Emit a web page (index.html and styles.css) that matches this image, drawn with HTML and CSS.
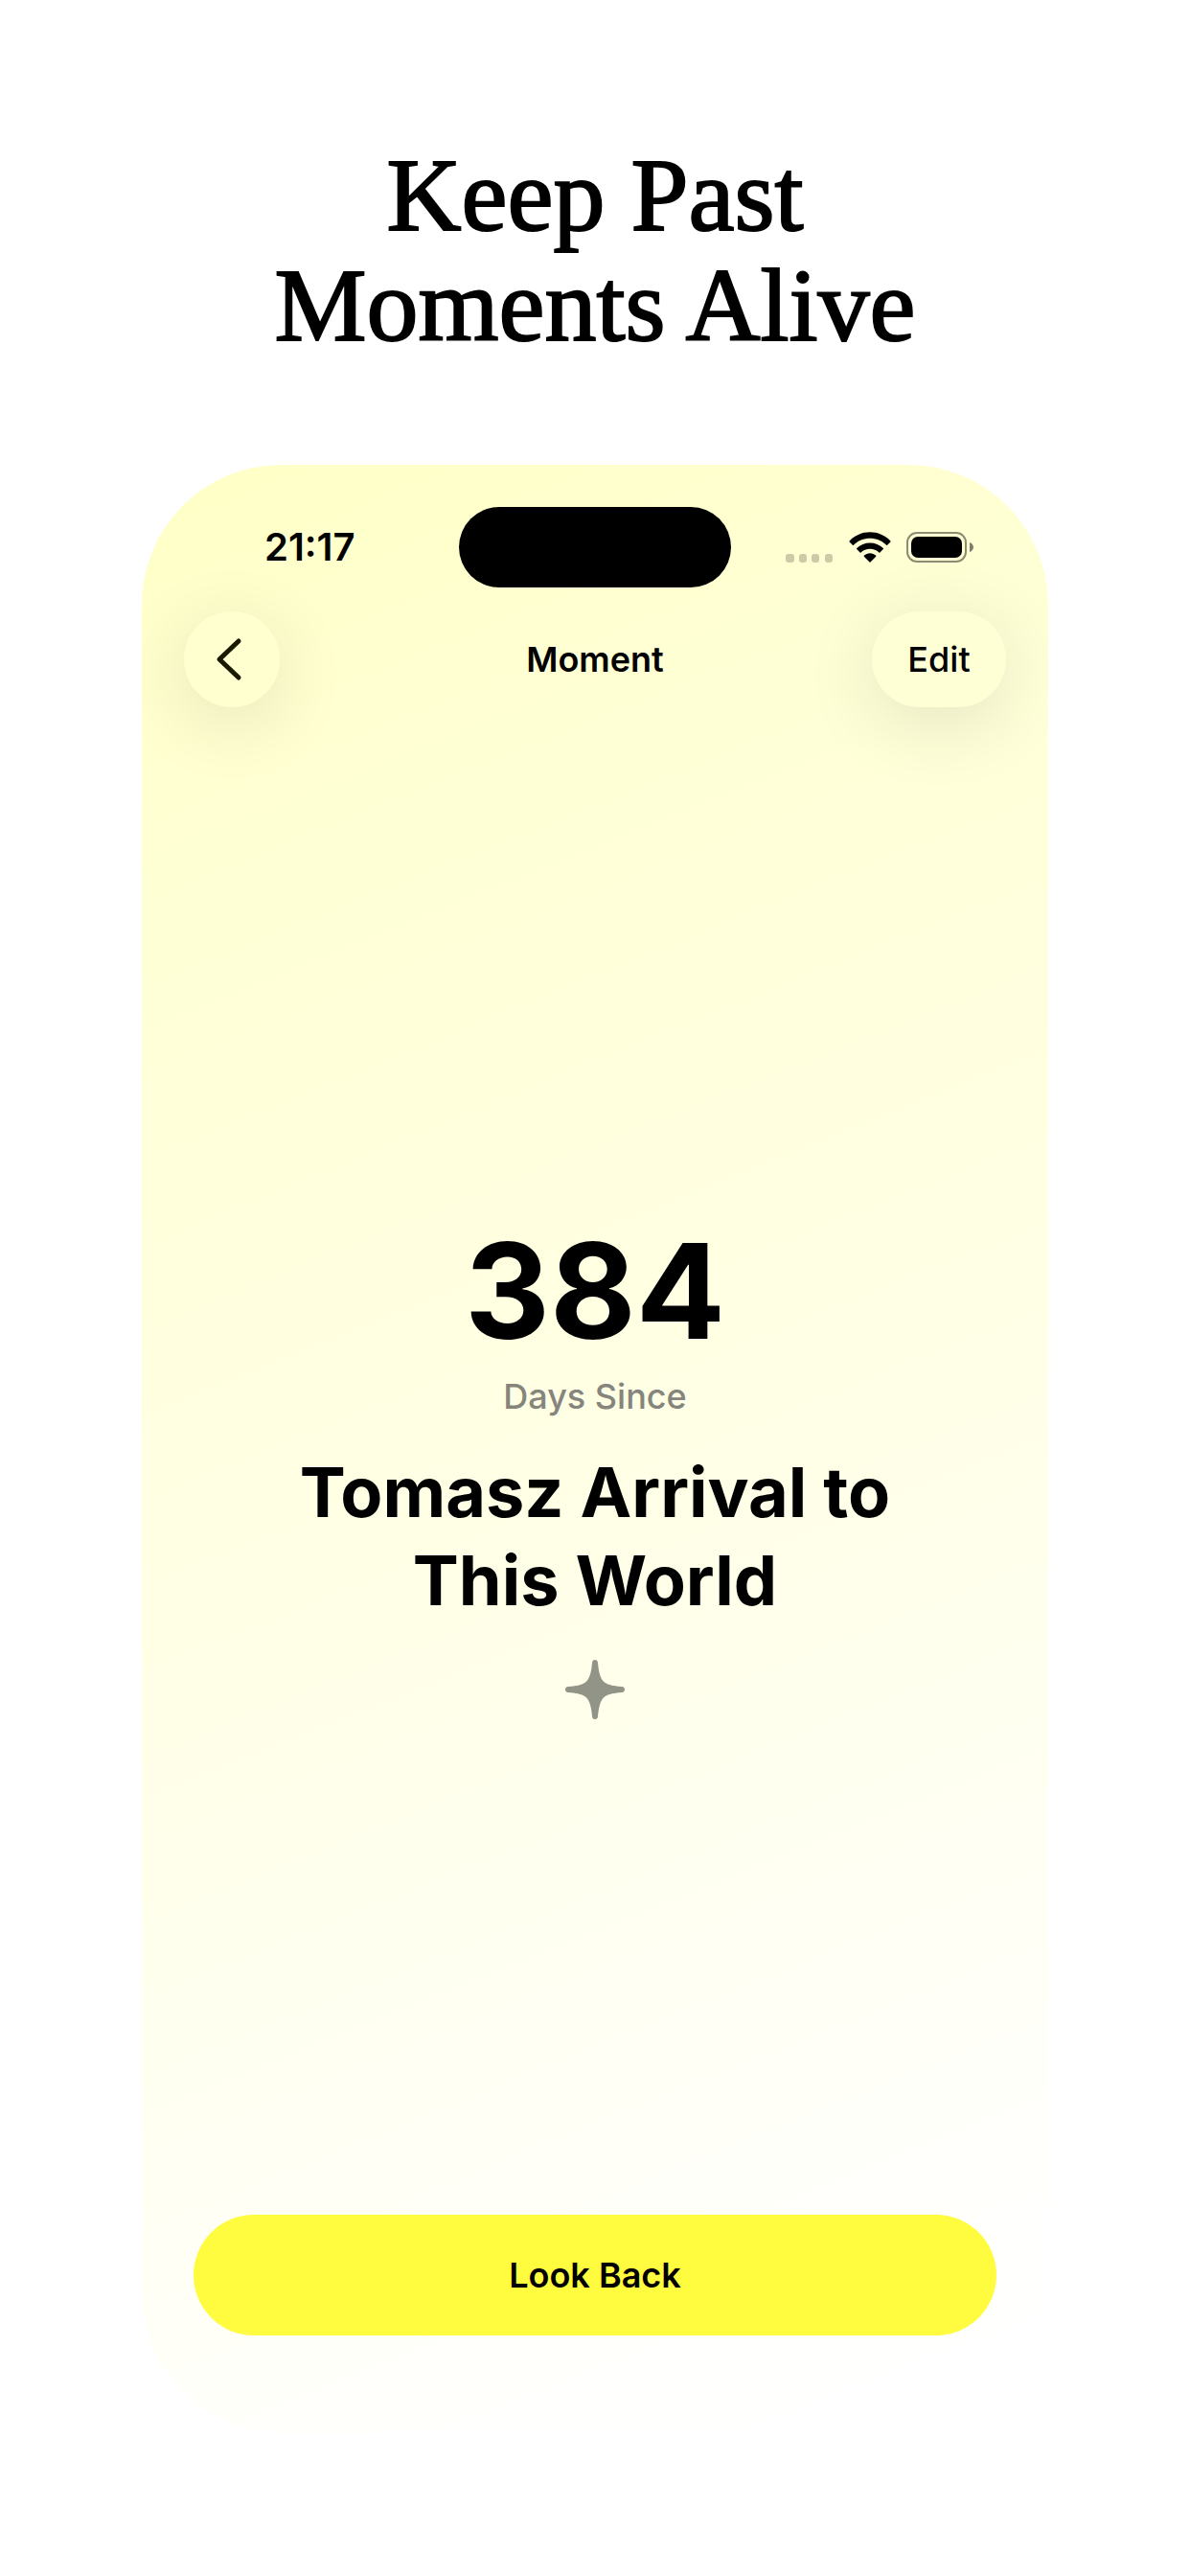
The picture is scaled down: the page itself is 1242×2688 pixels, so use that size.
FILE: index.html
```html
<!DOCTYPE html>
<html lang="en">
<head>
  <meta charset="UTF-8" />
  <meta name="viewport" content="width=device-width, initial-scale=1" />
  <title>Keep Past Moments Alive</title>
  <link rel="stylesheet" href="styles.css">
</head>
<body>

  <h1 class="headline">Keep Past<br>Moments Alive</h1>

  <main class="phone">
    <div class="status-bar">
      <time class="clock">21:17</time>
      <div class="island"></div>
      <div class="status-icons">
        <svg class="signal" width="50" height="32" viewBox="0 0 50 32" aria-hidden="true">
          <rect x="0" y="23" width="9" height="9" rx="3" />
          <rect x="14" y="23" width="8" height="9" rx="3" />
          <rect x="27" y="23" width="8" height="9" rx="3" />
          <rect x="41" y="23" width="8" height="9" rx="3" />
        </svg>
        <svg width="44" height="32" viewBox="0 0 44 32" aria-hidden="true">
          <path d="M.6 9.4C6.2 3.6 13.8.3 22 .3s15.8 3.3 21.4 9.1c.3.3.3.7 0 1l-3.3 3.4c-.3.3-.7.3-1 0C34.600 9.400 28.500 6.800 22 6.800S9.400 9.400 4.900 13.800c-.3.3-.7.3-1 0L.6 10.400c-.3-.3-.3-.7 0-1z" />
          <path d="M8.200 17C11.900 13.400 16.700 11.400 22 11.400S32.100 13.400 35.800 17c.3.3.3.7 0 1l-3.400 3.400c-.3.3-.7.3-1 0C28.800 19.100 25.500 17.800 22 17.800S15.200 19.100 12.600 21.400c-.3.3-.7.3-1 0L8.200 18c-.3-.3-.3-.7 0-1z" />
          <path d="M15.800 24.700C17.500 23.200 19.700 22.300 22 22.300s4.500.9 6.200 2.400c.3.3.3.7 0 1l-5.700 5.800c-.3.3-.7.300-1 0l-5.700-5.800c-.3-.3-.3-.7 0-1z" />
        </svg>
        <svg width="70" height="32" viewBox="0 0 70 32" aria-hidden="true">
          <rect class="battery-shell" x="1" y="1" width="61" height="30" rx="10" />
          <path class="battery-tip" d="M66 11c2.400.8 4 2.800 4 5s-1.600 4.200-4 5z" />
          <rect x="5" y="5" width="53" height="22" rx="7" />
        </svg>
      </div>
    </div>

    <nav class="nav-bar">
      <button class="glass back" type="button" aria-label="Back">
        <svg width="30" height="48" viewBox="0 0 30 48" aria-hidden="true">
          <path d="M26 5L6 24l20 19" />
        </svg>
      </button>
      <h2 class="nav-title">Moment</h2>
      <button class="glass edit" type="button">Edit</button>
    </nav>

    <section class="moment">
      <p class="count">384</p>
      <p class="caption">Days Since</p>
      <h3 class="title">Tomasz Arrival to<br>This World</h3>
      <svg class="sparkle" width="64" height="64" viewBox="0 0 64 64" aria-hidden="true">
        <path d="M32 1c1.800 0 2.800 1.100 3 2.900.9 11.500 3.200 17.600 7 20.600 4.300 3 10.500 3.900 18.100 4.500 1.800.2 2.900 1.200 2.900 3s-1.100 2.800-2.900 3c-7.600.6-13.800 1.500-18.100 4.500-3.800 3-6.100 9.100-7 20.600-.2 1.800-1.200 2.900-3 2.900s-2.800-1.100-3-2.900c-.9-11.500-3.200-17.600-7-20.600-4.300-3-10.500-3.900-18.100-4.500C2.100 34.800 1 33.800 1 32s1.100-2.800 2.900-3c7.600-.6 13.800-1.500 18.100-4.500 3.800-3 6.100-9.100 7-20.600C29.200 2.100 30.200 1 32 1z" />
      </svg>
    </section>

    <button class="look-back" type="button">Look Back</button>
  </main>

</body>
</html>
```
FILE: styles.css
```css
* {
  box-sizing: border-box;
}
body {
  margin: 0;
  min-height: 100vh;
  padding: 146px 148px 150px;
  display: flex;
  flex-direction: column;
  background: #fff;
  color: #000;
  font-family: Inter, "Liberation Sans", sans-serif;
}
h1, h2, h3, p {
  margin: 0;
}
button {
  border: 0;
  padding: 0;
  color: inherit;
  font: inherit;
  cursor: pointer;
}
svg {
  display: block;
}
.headline {
  margin-bottom: 109px;
  font-family: "Liberation Serif", serif;
  font-size: 108px;
  font-weight: 400;
  line-height: 115px;
  text-align: center;
  -webkit-text-stroke: 2px #000;
}
.phone {
  flex: 1;
  display: flex;
  flex-direction: column;
  padding: 44px 44px 101px;
  border-radius: 146px;
  background: linear-gradient(158deg, #ffffc6 0%, #ffffd3 16%, #ffffeb 60%, #fffffc 88%, #fff 96%);
  overflow: hidden;
}

/* status bar */
.status-bar {
  display: grid;
  grid-template-columns: 1fr 284px 1fr;
  align-items: center;
}
.clock {
  padding-left: 84px;
  font-size: 40px;
  font-weight: 600;
  line-height: 48px;
}
.island {
  height: 84px;
  border-radius: 42px;
  background: #000;
}
.status-icons {
  display: flex;
  justify-content: flex-end;
  gap: 16px;
  padding-right: 34px;
}
.signal {
  opacity: 0.2;
}
.battery-shell {
  fill: none;
  stroke: #000;
  stroke-width: 2;
  opacity: 0.45;
}
.battery-tip {
  opacity: 0.5;
}

/* navigation */
.nav-bar {
  display: grid;
  grid-template-columns: 1fr auto 1fr;
  align-items: center;
  margin-top: 25px;
}
.nav-title {
  font-size: 36px;
  font-weight: 600;
  line-height: 44px;
}
.glass {
  display: flex;
  align-items: center;
  justify-content: center;
  height: 100px;
  border-radius: 50px;
  background: #ffffd6;
  box-shadow: 0 16px 80px rgba(0, 0, 0, 0.11);
}
.back {
  width: 100px;
  background: #ffffd0;
}
.back svg {
  margin-right: 8px;
  fill: none;
  stroke: #1a1a00;
  stroke-width: 5;
  stroke-linecap: round;
  stroke-linejoin: round;
}
.edit {
  justify-self: end;
  width: 140px;
  font-size: 36px;
  font-weight: 500;
}

/* moment */
.moment {
  flex: 1;
  display: flex;
  flex-direction: column;
  align-items: center;
  justify-content: center;
  padding-top: 12px;
  text-align: center;
}
.count {
  font-size: 138px;
  font-weight: 700;
  line-height: 160px;
}
.caption {
  margin-top: 6px;
  color: #85857d;
  font-size: 36px;
  font-weight: 500;
  line-height: 48px;
}
.title {
  margin-top: 30px;
  font-size: 72px;
  font-weight: 700;
  line-height: 92px;
}
.sparkle {
  margin-top: 36px;
  fill: #929487;
}
.look-back {
  height: 126px;
  margin: 0 10px;
  border-radius: 63px;
  background: #fffb3f;
  font-size: 36px;
  font-weight: 600;
}
```
